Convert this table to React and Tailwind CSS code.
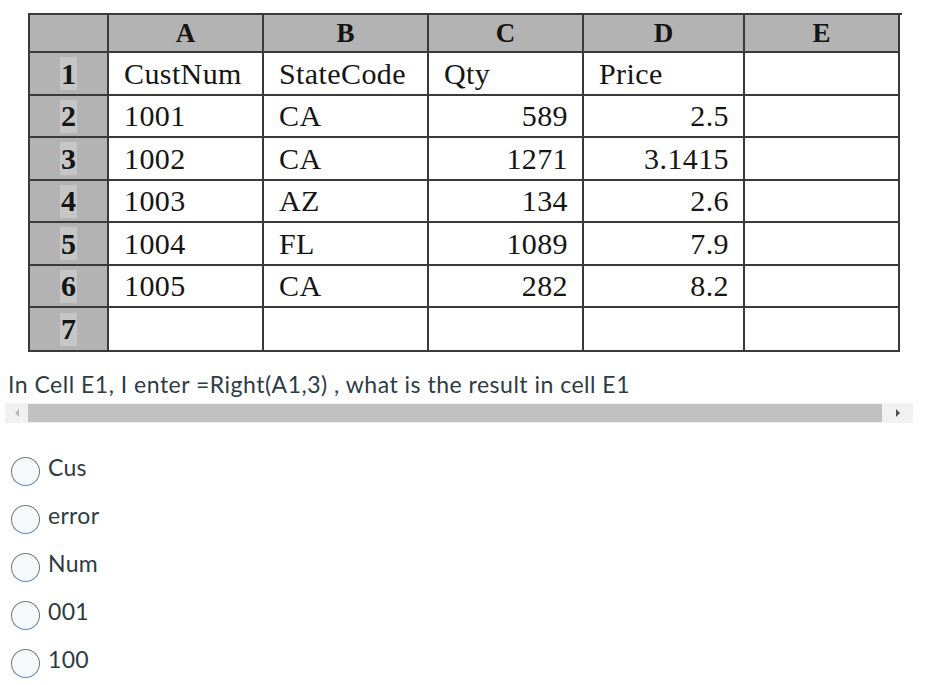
const cols = ['A', 'B', 'C', 'D', 'E'];
const rows = [
  ['CustNum', 'StateCode', 'Qty', 'Price', ''],
  ['1001', 'CA', '589', '2.5', ''],
  ['1002', 'CA', '1271', '3.1415', ''],
  ['1003', 'AZ', '134', '2.6', ''],
  ['1004', 'FL', '1089', '7.9', ''],
  ['1005', 'CA', '282', '8.2', ''],
  ['', '', '', '', ''],
];
const rowHeights = ['h-[43px]', 'h-[42px]', 'h-[43px]', 'h-[42px]', 'h-[43px]', 'h-[42px]', 'h-[44px]'];
const options = ['Cus', 'error', 'Num', '001', '100'];

function Sheet() {
  return (
    <div
      className="ml-[28px] w-[874px] grid grid-cols-[79px_155px_165px_155px_161px_155px] border-l-2 border-t-2 border-[#3a3a3a] text-[#151515]"
      style={{ fontFamily: '"Liberation Serif", "Times New Roman", serif' }}
    >
      {/* header row */}
      <div className="h-[38px] bg-[#b3b3b3] border-r-2 border-b-2 border-[#3a3a3a]" />
      {cols.map((c) => (
        <div
          key={c}
          className="h-[38px] bg-[#b3b3b3] border-r-2 border-b-2 border-[#3a3a3a] flex items-center justify-center text-[27px] font-bold"
        >
          {c}
        </div>
      ))}

      {rows.map((r, i) => (
        <div key={i} className="contents">
          <div className={`${rowHeights[i]} bg-[#b3b3b3] border-r-2 border-b-2 border-[#3a3a3a] flex items-center justify-center`}>
            <span className="bg-[#c6c6c6] px-[1px] h-[33px] flex items-center text-[30px] font-bold leading-none">{i + 1}</span>
          </div>
          {r.map((v, j) => (
            <div
              key={j}
              className={`${rowHeights[i]} bg-white border-r-2 border-b-2 border-[#3a3a3a] flex items-center text-[30px] leading-none tracking-[0.4px] ${
                i > 0 && (j === 2 || j === 3) ? 'justify-end pr-[14px]' : 'pl-[15px]'
              }`}
            >
              {v}
            </div>
          ))}
        </div>
      ))}
    </div>
  );
}

export default function App() {
  return (
    <div
      className="w-[929px] h-[685px] bg-white overflow-hidden pt-[13px] text-[#2d3b45]"
      style={{ fontFamily: 'Lato, "Open Sans", sans-serif' }}
    >
      <Sheet />

      <p className="mt-[18px] ml-[8px] text-[23px] leading-[28px] tracking-[0.5px]">
        In Cell E1, I enter =Right(A1,3) , what is the result in cell E1
      </p>

      {/* horizontal scrollbar */}
      <div className="mt-[5px] ml-[5px] w-[908px] h-[20px] bg-[#f1f1f1] flex items-center">
        <div className="w-[23px] flex justify-center">
          <div className="w-0 h-0 border-y-[4px] border-y-transparent border-r-[4px] border-r-[#b8b8b8]" />
        </div>
        <div className="w-[854px] h-[18px] bg-[#c1c1c1]" />
        <div className="flex-1 flex justify-center">
          <div className="w-0 h-0 border-y-[4px] border-y-transparent border-l-[4px] border-l-[#505050]" />
        </div>
      </div>

      {/* answers */}
      <div className="mt-[34px] ml-[11px] flex flex-col gap-[19px]">
        {options.map((o) => (
          <label key={o} className="flex items-start gap-[8px] h-[29px]">
            <span className="w-[29px] h-[29px] shrink-0 rounded-full border border-[#7a7a7a] border-b-[#5b86c9] bg-[#f6f8fb]" />
            <span className="text-[23px] leading-[21px] tracking-[0.3px] text-[#2d3b45]">{o}</span>
          </label>
        ))}
      </div>
    </div>
  );
}
